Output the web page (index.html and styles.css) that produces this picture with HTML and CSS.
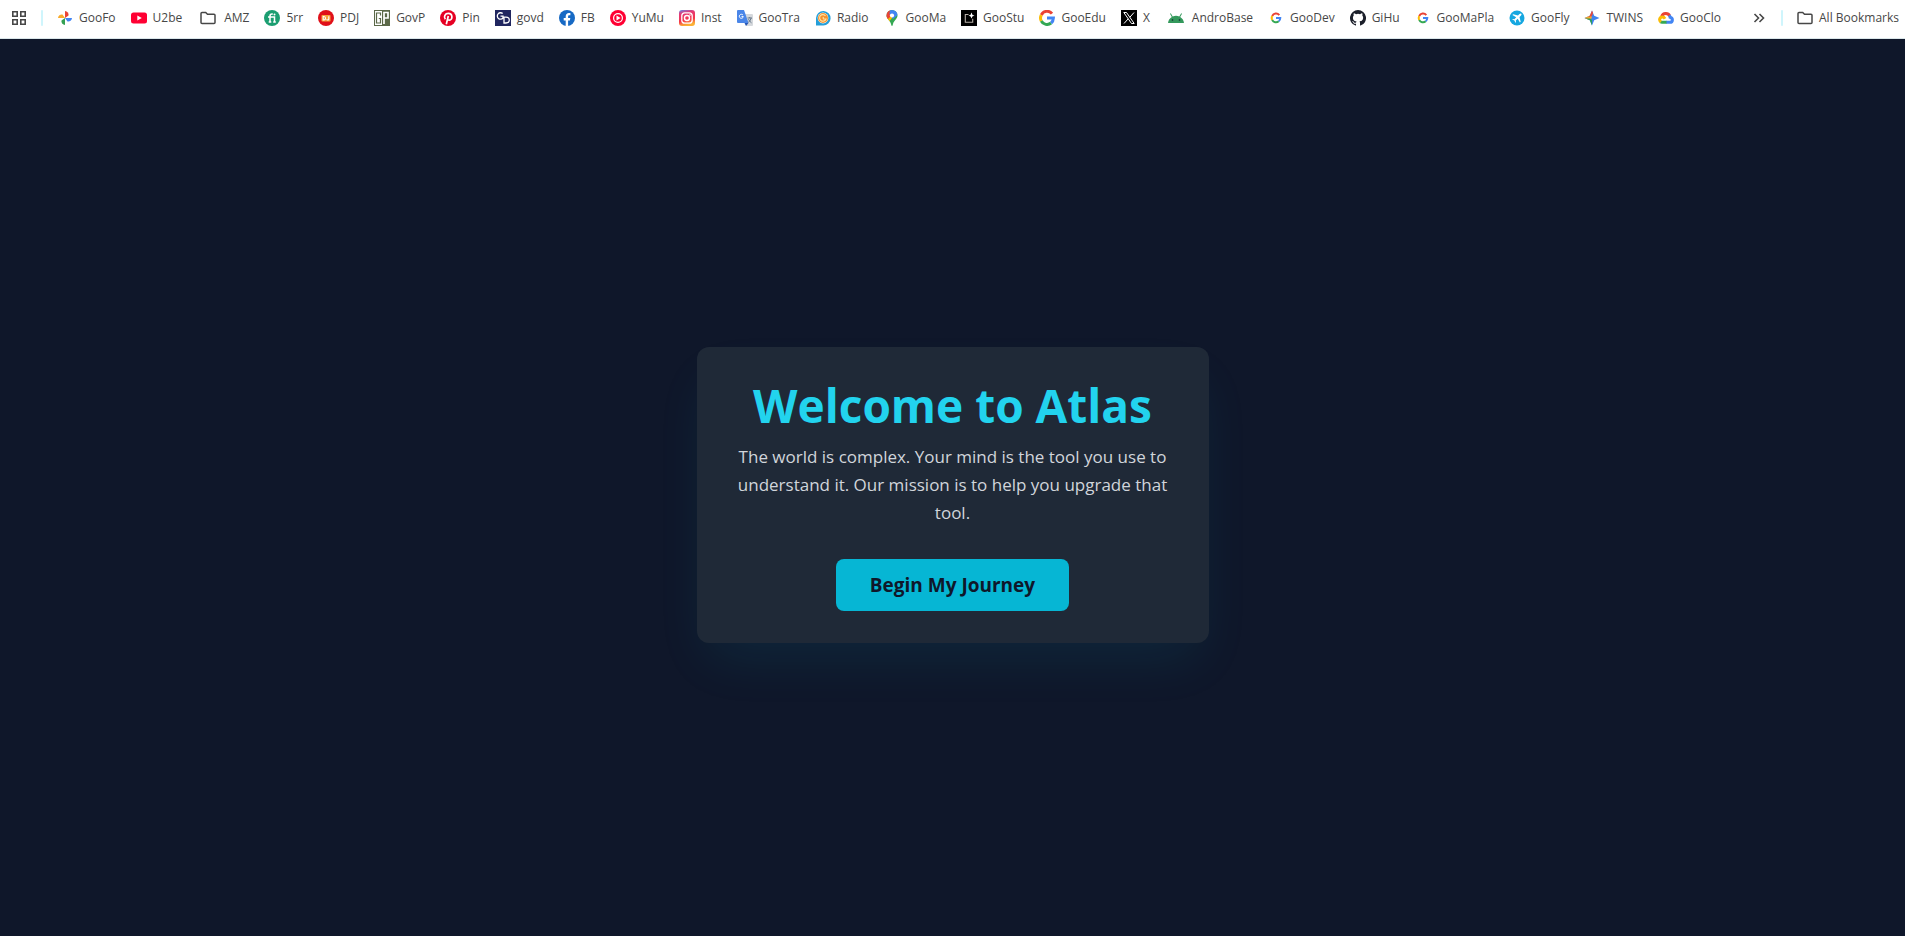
FILE: index.html
```html
<!DOCTYPE html>
<html lang="en">
<head>
<meta charset="utf-8">
<title>Atlas</title>
<link rel="stylesheet" href="styles.css">
</head>
<body>
<nav class="bar" aria-label="Bookmarks">
  <button class="apps" type="button" aria-label="Apps"><svg class="icon" viewBox="0 0 16 16" fill="none" stroke="#474747" stroke-width="1.6"><path d="M1.8 1.8h4.4v4.4H1.8zM9.8 1.8h4.4v4.4H9.8zM1.8 9.8h4.4v4.4H1.8zM9.8 9.8h4.4v4.4H9.8z"/></svg></button>
  <span class="divider"></span>
  <ul class="links">
    <li><a class="link" href="#"><svg class="icon" viewBox="0 0 16 16"><path fill="#ea4335" d="M8 8V1a3.7 3.7 0 0 1 3.5 4.5L8 8z"/><path fill="#4285f4" d="M8 8h7a3.7 3.7 0 0 1-4.5 3.5z"/><path fill="#34a053" d="M8 8v7a3.7 3.7 0 0 1-3.5-4.5z"/><path fill="#f9ab2b" d="M8 8H1a3.7 3.7 0 0 1 4.5-3.5z"/></svg>GooFo</a></li>
    <li><a class="link" href="#"><svg class="icon" viewBox="0 0 16 16"><rect y="2.5" width="16" height="11" rx="2.5" fill="#ff0033"/><path d="M6.3 5.5 10.8 8l-4.5 2.5z" fill="#fff"/></svg>U2be</a></li>
    <li><a class="link folder" href="#"><svg class="icon" viewBox="0 0 16 16" fill="none" stroke="#474747" stroke-width="1.5"><path d="M1 3.5q0-1 1-1h3.7l1.8 1.8H14q1 0 1 1V12.5q0 1-1 1H2q-1 0-1-1z"/></svg>AMZ</a></li>
    <li><a class="link" href="#"><svg class="icon" viewBox="0 0 16 16"><circle cx="8" cy="8" r="8" fill="#1b9e71"/><path d="M4 7h6.5v5M6 12V6q0-2 2-2h.8M4.7 12h2.600M9.200 12h2.600" fill="none" stroke="#fff" stroke-width="1.5"/><circle cx="10.5" cy="4.5" r="1" fill="#fff"/></svg>5rr</a></li>
    <li><a class="link" href="#"><svg class="icon" viewBox="0 0 16 16"><circle cx="8" cy="8" r="8" fill="#e01019"/><rect x="3.5" y="5" width="9" height="6.5" rx=".8" fill="#f5a23c"/><path d="M5.2 6.500v3.500h.8q1.500 0 1.500-1.700T6 6.500zM10.800 6.200v2.800q0 1-1 1t-1-.8" fill="none" stroke="#fff" stroke-width="1.1"/></svg>PDJ</a></li>
    <li><a class="link" href="#"><svg class="icon" viewBox="0 0 16 16"><path fill="#5b6848" d="M0 0h16v16H0z"/><path fill="#fff" d="M1 1h7v14H1z"/><path d="M6.500 5.500V3h-4v10h4V8.500H4.800" fill="none" stroke="#5b6848" stroke-width="1.2"/><path d="M10 14V2.500h4v5.500h-4" fill="none" stroke="#fff" stroke-width="1.7"/></svg>GovP</a></li>
    <li><a class="link" href="#"><svg class="icon" viewBox="0 0 16 16"><circle cx="8" cy="8" r="8" fill="#e60023"/><path d="M5.300 9.300C3.300 6.500 5.200 3.400 8.300 3.400c4.700 0 4.500 6.800 1.100 6.800-1.100 0-1.700-.8-1.700-.8M8.300 6 6.300 14.300" fill="none" stroke="#fff" stroke-width="1.7"/></svg>Pin</a></li>
    <li><a class="link" href="#"><svg class="icon" viewBox="0 0 16 16"><path fill="#20265f" d="M0 0h16v16H0z"/><path d="M7.700 3.600A3.200 3.200 0 1 0 8 8V6.200H5.500M9 7.200V13h2q3.300 0 3.300-2.900T11 7.200z" fill="none" stroke="#fff" stroke-width="1.3"/></svg>govd</a></li>
    <li><a class="link" href="#"><svg class="icon" viewBox="0 0 16 16"><circle cx="8" cy="8" r="8" fill="#1769c4"/><path fill="#fff" d="M6.700 16v-5.500h-2V8.100h2V6.500c0-2.300 1.200-3.500 3.200-3.500l1.500.1v2.100h-1c-1 0-1.300.5-1.300 1.300v1.600h2.200l-.4 2.400H9.100V16z"/></svg>FB</a></li>
    <li><a class="link" href="#"><svg class="icon" viewBox="0 0 16 16"><circle cx="8" cy="8" r="8" fill="#ff0033"/><circle cx="8" cy="8" r="4.4" fill="none" stroke="#fff" stroke-width="1.2"/><path fill="#fff" d="M6.500 5.600 10.600 8l-4.100 2.400z"/></svg>YuMu</a></li>
    <li><a class="link" href="#"><svg class="icon" viewBox="0 0 16 16"><defs><linearGradient id="insta" x1="0" y1="0" x2=".25" y2="1"><stop offset="0" stop-color="#5a8df0"/><stop offset=".25" stop-color="#e33a78"/><stop offset=".7" stop-color="#f5344b"/><stop offset="1" stop-color="#fbb034"/></linearGradient></defs><rect width="16" height="16" rx="3" fill="url(#insta)"/><rect x="2.8" y="2.8" width="10.4" height="10.4" rx="3" fill="none" stroke="#fff" stroke-width="1.3"/><circle cx="8" cy="8" r="2.5" fill="none" stroke="#fff" stroke-width="1.4"/><circle cx="11" cy="5" r=".8" fill="#fff"/></svg>Inst</a></li>
    <li><a class="link" href="#"><svg class="icon" viewBox="0 0 16 16"><path fill="#d5d8dc" d="M6 4h9q1 0 1 1v10q0 1-1 1H9z"/><path fill="#4a86e8" d="M1 0h6l4.500 13H1q-1 0-1-1V1q0-1 1-1z"/><path fill="#2857b5" d="M7.500 13h4L9 16z"/><path d="M6 5.200A2 2 0 1 0 6.300 6.600H4.500" fill="none" stroke="#fff" stroke-width="1"/><path d="M10.500 8h4.500M12.700 7v1M14.200 8q-.8 3-3 4.500M11.500 9.200q1 2.300 3 3.600" fill="none" stroke="#66788a" stroke-width="1"/></svg>GooTra</a></li>
    <li><a class="link" href="#"><svg class="icon" viewBox="0 0 16 16"><path fill="#259fd9" d="M1 15.500V8a7.300 7.300 0 1 1 7 7.500z"/><circle cx="8" cy="8" r="5.400" fill="#fff"/><circle cx="8" cy="8" r="5" fill="#f5922e"/><path d="M10.500 5.800A3.300 3.300 0 1 0 11 9H8.500q-.8-1 0-2" fill="none" stroke="#ffe2a2" stroke-width="1.2"/></svg>Radio</a></li>
    <li><a class="link" href="#"><svg class="icon" viewBox="0 0 16 16"><clipPath id="pin"><path d="M8 0a5.500 5.500 0 0 1 5.500 5.500C13.500 9 9.700 10.500 9 14q-.3 2-1 2t-1-2C6.300 10.500 2.500 9 2.500 5.500A5.500 5.500 0 0 1 8 0z"/></clipPath><g clip-path="url(#pin)"><path fill="#34a853" d="M0 0h16v16H0z"/><path fill="#fbbc04" d="M0 11 8 3v5l-4 5z"/><path fill="#ea4335" d="M0 0h6l2 5-4 4-4-1z"/><path fill="#4285f4" d="M6 0h10v3L9 9 5.500 4z"/></g><circle cx="8" cy="5.500" r="2.100" fill="#fff"/></svg>GooMa</a></li>
    <li><a class="link" href="#"><svg class="icon" viewBox="0 0 16 16"><path d="M0 0h16v16H0z"/><path d="M7.500 4.500H4.300v7.700h7.400V8.700" fill="none" stroke="#b8b0a8" stroke-width="1.1"/><path fill="#fff" d="M10.500 2.500q.3 2.700 3 3-2.700.3-3 3-.3-2.700-3-3 2.700-.3 3-3z"/></svg>GooStu</a></li>
    <li><a class="link" href="#"><svg class="icon" viewBox="0 0 16 16"><g id="g" fill="none" stroke-width="3"><path stroke="#ea4335" d="M13 3.600A6.400 6.400 0 0 0 2.300 5"/><path stroke="#fbbc05" d="M2.300 5a6.400 6.400 0 0 0 0 6"/><path stroke="#34a853" d="M2.300 11a6.400 6.400 0 0 0 9.800 2"/><path stroke="#4285f4" d="M12.100 13Q14.300 11.300 14.400 8H8"/></g></svg>GooEdu</a></li>
    <li><a class="link" href="#"><svg class="icon" viewBox="0 0 16 16"><path d="M0 0h16v16H0z"/><path d="M2.800 2.500h2.700l7.700 11h-2.700zM13 2.500 8.800 7.300M7.200 8.800 3 13.500" fill="none" stroke="#fff" stroke-width="1"/></svg>X</a></li>
    <li><a class="link folder" href="#"><svg class="icon" viewBox="0 0 16 16"><path fill="#34995c" d="M0 13q.4-4 3.800-6L2 3.800l.8-.5L4.700 6.500q3.300-1.400 6.600 0l1.900-3.200.8.500L12.200 7q3.400 2 3.800 6z"/><g fill="#123"><circle cx="4.500" cy="10" r=".8"/><circle cx="11.500" cy="10" r=".8"/></g></svg>AndroBase</a></li>
    <li><a class="link" href="#"><svg class="icon" viewBox="-4 -4 24 24"><use href="#g"/></svg>GooDev</a></li>
    <li><a class="link" href="#"><svg class="icon" viewBox="0 0 16 16"><path fill="#1b1f2a" d="M8 0a8 8 0 0 0-2.530 15.590c.4.070.550-.170.550-.380v-1.490c-2.230.480-2.700-.950-2.700-.950-.360-.920-.890-1.170-.890-1.170-.730-.500.060-.490.060-.490.800.060 1.230.830 1.230.830.710 1.220 1.870.870 2.330.660.070-.520.280-.870.510-1.070-1.780-.200-3.640-.890-3.640-3.950 0-.870.310-1.590.820-2.150-.080-.200-.360-1.020.080-2.120 0 0 .670-.210 2.200.820a7.700 7.700 0 0 1 4 0c1.530-1.040 2.200-.820 2.200-.820.440 1.100.160 1.920.080 2.120.510.560.820 1.270.820 2.150 0 3.070-1.870 3.750-3.650 3.950.290.250.540.730.540 1.480v2.200c0 .210.150.460.550.380A8 8 0 0 0 8 0z"/></svg>GiHu</a></li>
    <li><a class="link" href="#"><svg class="icon" viewBox="-4 -4 24 24"><use href="#g"/></svg>GooMaPla</a></li>
    <li><a class="link" href="#"><svg class="icon" viewBox="0 0 16 16"><circle cx="8" cy="8" r="7.500" fill="#16a7e0"/><path fill="#fff" d="M12.300 3.700q-.8-.7-1.800.3L9 5.500 4.200 4.300l-.8.800L7.200 7.300 5.400 9.200l-1.600-.2-.6.600 2.200 1 1 2.200.6-.6-.2-1.600 1.900-1.800 2.200 3.800.8-.8L10.500 7 12 5.500q1-1 .3-1.800z"/></svg>GooFly</a></li>
    <li><a class="link" href="#"><svg class="icon" viewBox="0 0 16 16"><clipPath id="star"><path d="M8 .5 10.200 5.800 15.500 8l-5.300 2.200L8 15.500l-2.200-5.300L.5 8l5.300-2.200z"/></clipPath><g clip-path="url(#star)"><path fill="#3f83ee" d="M0 0h16v16H0z"/><path fill="#f4a62c" d="M0 3h6l2 5-3 2-5-1z"/><path fill="#e8493c" d="M4 0h6L8 6 5 7z"/><path fill="#2e9e5b" d="M0 8.500h6L8 10v6H4z"/></g></svg>TWINS</a></li>
    <li><a class="link" href="#"><svg class="icon" viewBox="0 0 16 16" fill="none" stroke-width="3"><path stroke="#ea4335" d="M3.700 6.300C5 2.800 10 2.300 11.700 5.800"/><path stroke="#4285f4" d="M11.300 5.400Q12 6.500 12.100 7.300C15.300 8 15 12.300 12 12.300H8"/><path stroke="#34a853" d="M8.500 12.300H4q-.8 0-1.500-.5"/><path stroke="#fbbc05" d="M2.900 12C.7 10.300 1.500 7 4.300 7q1.800 0 2.700 1.700"/></svg>GooClo</a></li>
  </ul>
  <button class="more" type="button" aria-label="More bookmarks"><svg class="icon" viewBox="0 0 16 16" fill="none" stroke="#474747" stroke-width="1.6"><path d="m3.500 4 4 4-4 4M8.500 4l4 4-4 4"/></svg></button>
  <span class="divider"></span>
  <a class="link" href="#"><svg class="icon" viewBox="0 0 16 16" fill="none" stroke="#474747" stroke-width="1.5"><path d="M1 3.500q0-1 1-1h3.700l1.800 1.800H14q1 0 1 1V12.500q0 1-1 1H2q-1 0-1-1z"/></svg>All Bookmarks</a>
</nav>
<main class="page">
  <section class="card">
    <h1 class="title">Welcome to Atlas</h1>
    <p class="intro">The world is complex. Your mind is the tool you use to understand it. Our mission is to help you upgrade that tool.</p>
    <button class="start" type="button">Begin My Journey</button>
  </section>
</main>
</body>
</html>
```

FILE: styles.css
```css
* {
  box-sizing: border-box;
}

body {
  margin: 0;
  min-height: 100vh;
  display: flex;
  flex-direction: column;
  background: #0f172a;
  font-family: "Open Sans", "Noto Sans", sans-serif;
}

button {
  font-family: inherit;
  border: 0;
  cursor: pointer;
}

.bar {
  display: flex;
  align-items: center;
  padding: 10px 6px 12px 11px;
  background: #fff;
  border-bottom: 1px solid #dbe7ea;
  color: #474747;
  font-size: 12px;
  line-height: 16px;
}

.icon {
  display: block;
  flex: none;
  width: 16px;
  height: 16px;
}

.apps,
.more {
  flex: none;
  padding: 0;
  background: none;
}

.divider {
  flex: none;
  width: 2px;
  height: 16px;
  margin: 0 14px;
  border-radius: 1px;
  background: #cff5fc;
}

.links {
  flex: 1;
  display: flex;
  justify-content: space-between;
  margin: 0 30px 0 0;
  padding: 0;
  list-style: none;
}

.link {
  display: flex;
  flex: none;
  align-items: center;
  gap: 6px;
  color: inherit;
  text-decoration: none;
  white-space: nowrap;
}

.folder {
  gap: 8px;
  padding-left: 3px;
}

.page {
  flex: 1;
  display: flex;
  align-items: center;
  justify-content: center;
  padding: 14px 16px 0;
}

.card {
  width: 100%;
  max-width: 512px;
  padding: 32px;
  border-radius: 12px;
  background: #1f2937;
  box-shadow: 0 25px 50px -12px rgba(6, 182, 212, 0.1);
  text-align: center;
}

.title {
  margin: 0 0 12px;
  color: #22d3ee;
  font-size: 46px;
  font-weight: 700;
  line-height: 52px;
}

.intro {
  margin: 0 0 32px;
  color: #d1d5db;
  font-size: 17px;
  line-height: 28px;
}

.start {
  padding: 12px 34px;
  border-radius: 8px;
  background: #06b6d4;
  color: #0f172a;
  font-size: 19px;
  font-weight: 700;
  line-height: 28px;
}
```
